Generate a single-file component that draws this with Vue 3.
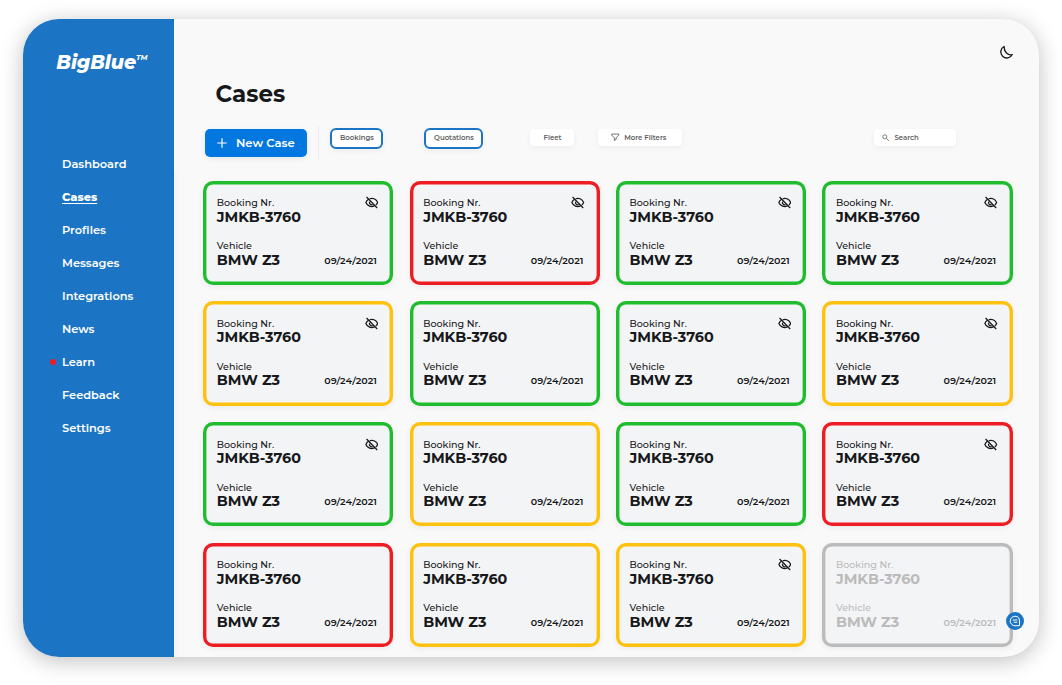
<script setup>
const nav = [
  { label: 'Dashboard' },
  { label: 'Cases', active: true },
  { label: 'Profiles' },
  { label: 'Messages' },
  { label: 'Integrations' },
  { label: 'News' },
  { label: 'Learn', alert: true },
  { label: 'Feedback' },
  { label: 'Settings' },
]

const cases = [
  ['green', true], ['red', true], ['green', true], ['green', true],
  ['amber', true], ['green', false], ['green', true], ['amber', true],
  ['green', true], ['amber', false], ['green', false], ['red', true],
  ['red', false], ['amber', false], ['amber', true], ['muted', false],
].map(([tone, hidden], id) => ({
  id, tone, hidden, booking: 'JMKB-3760', vehicle: 'BMW Z3', date: '09/24/2021',
}))
</script>

<template>
  <div class="page">
    <div class="window">
      <aside class="sidebar">
        <div class="brand"><span>BigBlue</span><sup>TM</sup></div>
        <nav class="nav">
          <a v-for="item in nav" :key="item.label" class="nav-item" :class="{ active: item.active, alert: item.alert }">{{ item.label }}</a>
        </nav>
      </aside>

      <main class="main">
        <header class="header">
          <h1>Cases</h1>
          <svg class="moon" viewBox="0 0 24 24"><path d="M8.500 2.500A10 10 0 1 0 22 15.800C15 18 8 11 8.500 2.500Z" /></svg>
        </header>

        <div class="toolbar">
          <button class="new-case">
            <svg viewBox="0 0 10 10"><path d="M5 .3V9.7M.3 5H9.7" /></svg>
            <span>New Case</span>
          </button>
          <i class="divider"></i>
          <button class="chip selected bookings">Bookings</button>
          <button class="chip selected quotations">Quotations</button>
          <button class="chip fleet">Fleet</button>
          <button class="chip filters">
            <svg viewBox="0 0 24 24"><path d="M2 3H22V6L14.5 13.5V18L9.5 21V13.5L2 6Z" /></svg>
            <span>More Filters</span>
          </button>
          <div class="chip search">
            <svg viewBox="0 0 24 24"><circle cx="9" cy="9" r="6.5" /><path d="M14 14L22 22" /></svg>
            <span>Search</span>
          </div>
        </div>

        <section class="grid">
          <article v-for="c in cases" :key="c.id" class="card" :class="c.tone">
            <div class="label">Booking Nr.</div>
            <div class="value">{{ c.booking }}</div>
            <div class="label vehicle-label">Vehicle</div>
            <div class="bottom">
              <div class="value">{{ c.vehicle }}</div>
              <time>{{ c.date }}</time>
            </div>
            <svg v-if="c.hidden" class="eye" viewBox="0 0 26 24">
              <path d="M9 4.800C16 2.800 22 6.500 24.300 12C23.500 14 22.300 15.700 20.800 17M6 6.300C3.900 7.800 2.500 9.800 1.700 12C4.500 19 12 21.500 18 18.600M9 10.500A4.200 4.200 0 0 0 14.500 16M3 1.500L23.500 22.500" />
            </svg>
          </article>
        </section>
      </main>

      <button class="chat" aria-label="Chat">
        <svg viewBox="0 0 24 24"><path d="M12 2.500A9.500 9.500 0 1 0 12 21.500H21V12A9.500 9.500 0 0 0 12 2.500M7.500 10H16.500M9.500 14.500H16.500" /></svg>
      </button>
    </div>
  </div>
</template>

<style>
body {
  background: #fff;
}
</style>

<style scoped>
.page {
  box-sizing: border-box;
  width: 1062px;
  height: 685px;
  padding: 19px 23px 28px;
  overflow: hidden;
  font-family: Montserrat, Inter, "Open Sans", sans-serif;
  color: #17181a;
}
.window {
  position: relative;
  display: flex;
  height: 638px;
  border-radius: 36px;
  background: #f9f9f9;
  box-shadow: 0 4px 22px rgba(0, 0, 0, 0.25);
}
button {
  font-family: inherit;
}
.sidebar {
  flex: 0 0 150.700px;
  border-radius: 36px 0 0 36px;
  background: #1c75c4;
  color: #fff;
}
.brand {
  display: flex;
  height: 24px;
  margin: 32px 0 0 33.300px;
  font-size: 19px;
  font-style: italic;
  font-weight: 800;
  line-height: 24px;
}
.brand sup {
  font-size: 7.300px;
  font-weight: 700;
  line-height: 14px;
}
.nav {
  display: flex;
  flex-direction: column;
  margin-top: 73px;
}
.nav-item {
  position: relative;
  height: 33px;
  padding-left: 39px;
  font-size: 11.400px;
  font-weight: 600;
  line-height: 33px;
}
.nav-item.active {
  font-weight: 800;
  text-decoration: underline;
  text-underline-offset: 1.500px;
}
.nav-item.alert::before {
  content: "";
  position: absolute;
  left: 27px;
  top: 13px;
  width: 6px;
  height: 6px;
  border-radius: 50%;
  background: #ee1d23;
}
.main {
  position: relative;
  flex: 1;
  padding: 0 26px 0 29.600px;
}
.main::before {
  content: "";
  position: absolute;
  left: 0;
  top: 152px;
  bottom: 0;
  width: 5px;
  background: linear-gradient(90deg, #f4f4f4, #f9f9f9);
}
.header {
  display: flex;
  justify-content: space-between;
  height: 107px;
}
h1 {
  margin: 59px 0 0 12.200px;
  font-size: 23px;
  line-height: 32px;
}
.moon {
  width: 14.500px;
  height: 14.500px;
  margin-top: 26px;
  fill: none;
  stroke: #17181a;
  stroke-width: 2.200;
  stroke-linejoin: round;
}
.toolbar {
  display: flex;
  align-items: flex-start;
  height: 54.600px;
}
.toolbar button {
  padding: 0;
}
.new-case {
  display: flex;
  align-items: center;
  width: 102px;
  height: 27.500px;
  margin: 3.400px 0 0 1.700px;
  border: 0;
  border-radius: 5px;
  background: #0277df;
  box-shadow: 0 2px 6px rgba(0, 0, 0, 0.08);
  color: #fff;
  font-size: 11.600px;
  font-weight: 600;
}
.new-case svg {
  width: 10px;
  height: 10px;
  margin: 0 9px 0 12px;
  fill: none;
  stroke: #fff;
  stroke-width: 1.200;
}
.divider {
  width: 1.500px;
  height: 33px;
  margin-left: 11px;
  background: #ececec;
}
.chip {
  box-sizing: border-box;
  display: flex;
  align-items: center;
  justify-content: center;
  height: 17.500px;
  margin-top: 2.800px;
  border: 0;
  border-radius: 4px;
  background: #fff;
  box-shadow: 0 2px 6px rgba(0, 0, 0, 0.05);
  color: #606060;
  font-size: 6.950px;
  font-weight: 600;
}
.toolbar .chip.selected {
  height: 21px;
  margin-top: 1.500px;
  padding-bottom: 1.500px;
  border: 2px solid #1c75c4;
  border-radius: 6px;
}
.chip svg {
  fill: none;
  stroke: #606060;
  stroke-width: 2.500;
}
.bookings {
  width: 53px;
  margin-left: 11px;
}
.quotations {
  width: 59px;
  margin-left: 41px;
}
.fleet {
  width: 44px;
  margin-left: 47px;
}
.chip.filters {
  justify-content: flex-start;
  width: 84px;
  margin-left: 24px;
}
.filters svg {
  width: 8.500px;
  height: 8.500px;
  margin: 0 4.200px 0 13px;
}
.search {
  width: 82.500px;
  margin-left: 191.500px;
}
.chip.search {
  justify-content: flex-start;
}
.search svg {
  width: 7.500px;
  height: 7.500px;
  margin: 0 5px 0 8px;
}
.grid {
  display: grid;
  grid-template-columns: repeat(4, 190.200px);
  grid-auto-rows: 104.500px;
  gap: 16.200px;
}
.card {
  --tone: #1fbd2e;
  position: relative;
  box-sizing: border-box;
  padding: 15.600px 16.500px 0 13.500px;
  border-radius: 10px;
  background: #f3f4f6;
  box-shadow: inset 0 0 0 3.400px var(--tone), 0 2px 6px rgba(0, 0, 0, 0.06);
}
.card.red {
  --tone: #ee1d23;
}
.card.amber {
  --tone: #fec10d;
}
.card.muted {
  --tone: #bbb;
  color: #bbb;
}
.label {
  height: 13.500px;
  font-size: 9.550px;
  font-weight: 500;
  line-height: 13px;
}
.value {
  height: 15px;
  font-size: 14.350px;
  font-weight: 700;
  line-height: 15px;
}
.vehicle-label {
  margin-top: 14.500px;
}
.bottom {
  display: flex;
  justify-content: space-between;
}
time {
  font-size: 9.550px;
  font-weight: 600;
  line-height: 16px;
}
.eye {
  position: absolute;
  right: 15px;
  top: 15.700px;
  width: 13.500px;
  height: 13px;
  fill: none;
  stroke: #17181a;
  stroke-width: 2.400;
}
.chat {
  position: absolute;
  left: 983.300px;
  top: 592.800px;
  display: flex;
  align-items: center;
  justify-content: center;
  width: 18px;
  height: 18px;
  padding: 0;
  border: 0;
  border-radius: 50%;
  background: #1c75c4;
}
.chat svg {
  width: 12px;
  height: 12px;
  fill: none;
  stroke: #fff;
  stroke-width: 2;
}
</style>
